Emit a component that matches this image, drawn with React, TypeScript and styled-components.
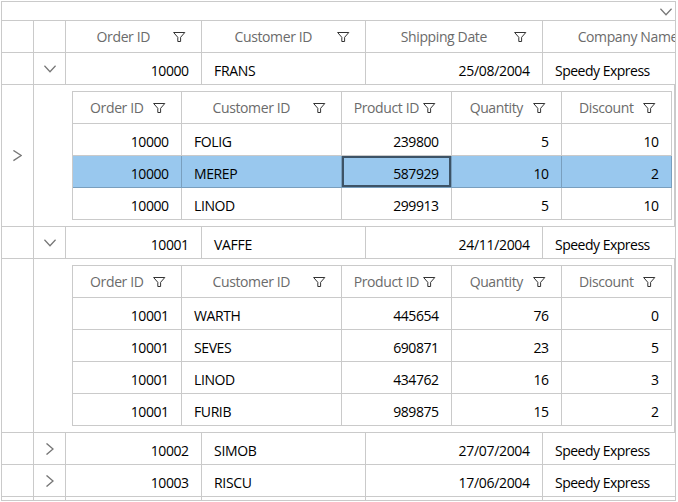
import React from 'react';
import styled, { createGlobalStyle, css } from 'styled-components';

const LINE = '#cacaca';
const SELECTED_LINE = '#799fbe';

const GlobalStyle = createGlobalStyle`
  * { box-sizing: border-box; }
  body {
    margin: 0;
    background: #fff;
    overflow: hidden;
    font-family: "Open Sans", "Noto Sans", sans-serif;
    font-size: 14px;
    color: #000;
  }
`;

const Page = styled.main`
  padding: 1px;
  height: 502px;
`;

const Grid = styled.section`
  width: 675px;
  height: 500px;
  border: 1px solid ${LINE};
  overflow: hidden;
`;

const GroupBar = styled.div`
  height: 19px;
  display: flex;
  justify-content: flex-end;
  align-items: flex-start;
  padding: 6px 3px 0 0;
  border-bottom: 1px solid ${LINE};
`;

const MasterRow = styled.div`
  display: grid;
  grid-template-columns: 32px 32px 136px 164px 177px 191px;
  width: 732px;
  height: 32px;
  border-bottom: 1px solid ${LINE};
`;

const DetailRow = styled.div`
  display: grid;
  grid-template-columns: 32px 1fr;
  border-bottom: 1px solid ${LINE};
`;

const DetailHost = styled.div`
  padding: 6px 0 6px 38px;
  border-right: 1px solid ${LINE};
`;

const DetailTable = styled.div`
  width: 600px;
  border-left: 1px solid ${LINE};
  border-top: 1px solid ${LINE};
`;

const DetailLine = styled.div<{ $selected?: boolean }>`
  display: grid;
  grid-template-columns: 109px 160px 110px 110px 110px;
  height: 32px;
  border-bottom: 1px solid ${p => (p.$selected ? SELECTED_LINE : LINE)};
  ${p => p.$selected && css`
    background: #99c8ee;
    && > * { border-right-color: ${SELECTED_LINE}; }
  `}
`;

const IconCell = styled.div`
  display: flex;
  align-items: center;
  justify-content: center;
  border-right: 1px solid ${LINE};
`;

const Cell = styled.div<{ $left?: boolean; $focused?: boolean }>`
  padding: 0 12px;
  border-right: 1px solid ${LINE};
  line-height: 36px;
  height: 31px;
  white-space: nowrap;
  text-align: ${p => (p.$left ? 'left' : 'right')};
  ${p => p.$focused && css`box-shadow: inset 0 0 0 2px #3d5366;`}
`;

const Text = styled.span<{ $spacing: number }>`
  letter-spacing: ${p => p.$spacing}px;
  margin-right: ${p => -p.$spacing}px;
`;

const HeaderCell = styled.div`
  display: flex;
  height: 31px;
  padding-right: 15px;
  border-right: 1px solid ${LINE};
  color: #6b6b6b;
  line-height: 32px;
  white-space: nowrap;
`;

const HeaderLabel = styled.span`
  flex: 1;
  text-align: center;
`;

const FilterSvg = styled.svg`
  flex: none;
  margin: 11px 0 0 -8px;
`;

const Filter = () => (
  <FilterSvg width="13" height="10" viewBox="0 0 13 10" fill="none" stroke="#333">
    <path d="M.6 .5H11.8L7.6 5.3V9.5H4.8V5.3Z" />
  </FilterSvg>
);

const Chevron = styled.svg`
  display: block;
`;

const Down = () => (
  <Chevron width="12" height="8" viewBox="0 0 12 8" fill="none" stroke="#777" strokeWidth="1.3">
    <path d="M.4 .8L6 6.8L11.6 .8" />
  </Chevron>
);

const Right = ({ wide }: { wide?: boolean }) => (
  <Chevron width={wide ? 9 : 8} height="12" viewBox={wide ? '0 0 9 12' : '0 0 8 12'} fill="none" stroke="#777" strokeWidth="1.3">
    <path d={wide ? 'M.4 .4L8.2 5.5L.4 10.6' : 'M.5 .4L7 6L.5 11.6'} />
  </Chevron>
);

const Header = ({ children }: { children: string }) => (
  <HeaderCell>
    <HeaderLabel><Text $spacing={-0.38}>{children}</Text></HeaderLabel>
    <Filter />
  </HeaderCell>
);

type DetailItem = [string, string, string, string, string];

const Detail = ({ items, selected, current }: { items: DetailItem[]; selected?: number; current?: boolean }) => (
  <DetailRow>
    <IconCell>{current && <Right wide />}</IconCell>
    <DetailHost>
      <DetailTable>
        <DetailLine>
          <Header>Order ID</Header>
          <Header>Customer ID</Header>
          <Header>Product ID</Header>
          <Header>Quantity</Header>
          <Header>Discount</Header>
        </DetailLine>
        {items.map((item, row) => (
          <DetailLine key={row} $selected={row === selected}>
            {item.map((value, col) => (
              <Cell key={col} $left={col === 1} $focused={row === selected && col === 2}>
                <Text $spacing={col === 1 ? -0.4 : -0.45}>{value}</Text>
              </Cell>
            ))}
          </DetailLine>
        ))}
      </DetailTable>
    </DetailHost>
  </DetailRow>
);

const Master = ({ id, customer, date, open }: { id: string; customer: string; date: string; open?: boolean }) => (
  <MasterRow>
    <IconCell />
    <IconCell>{open ? <Down /> : <Right />}</IconCell>
    <Cell><Text $spacing={-0.45}>{id}</Text></Cell>
    <Cell $left><Text $spacing={-0.3}>{customer}</Text></Cell>
    <Cell><Text $spacing={-0.32}>{date}</Text></Cell>
    <Cell $left><Text $spacing={-0.5}>Speedy Express</Text></Cell>
  </MasterRow>
);

const firstItems: DetailItem[] = [
  ['10000', 'FOLIG', '239800', '5', '10'],
  ['10000', 'MEREP', '587929', '10', '2'],
  ['10000', 'LINOD', '299913', '5', '10'],
];

const secondItems: DetailItem[] = [
  ['10001', 'WARTH', '445654', '76', '0'],
  ['10001', 'SEVES', '690871', '23', '5'],
  ['10001', 'LINOD', '434762', '16', '3'],
  ['10001', 'FURIB', '989875', '15', '2'],
];

export default function App() {
  return (
    <Page>
      <GlobalStyle />
      <Grid>
        <GroupBar><Down /></GroupBar>
        <MasterRow>
          <IconCell />
          <IconCell />
          <Header>Order ID</Header>
          <Header>Customer ID</Header>
          <Header>Shipping Date</Header>
          <Header>Company Name</Header>
        </MasterRow>
        <Master id="10000" customer="FRANS" date="25/08/2004" open />
        <Detail items={firstItems} selected={1} current />
        <Master id="10001" customer="VAFFE" date="24/11/2004" open />
        <Detail items={secondItems} />
        <Master id="10002" customer="SIMOB" date="27/07/2004" />
        <Master id="10003" customer="RISCU" date="17/06/2004" />
        <MasterRow>
          <IconCell /><IconCell /><IconCell /><IconCell /><IconCell /><IconCell />
        </MasterRow>
      </Grid>
    </Page>
  );
}
